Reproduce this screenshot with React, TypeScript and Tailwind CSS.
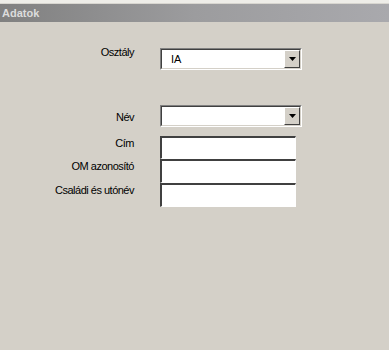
import React from "react";

const font = { fontFamily: "'Liberation Sans', Arial, sans-serif" };

function Arrow() {
  return (
    <div className="w-[16px] h-full bg-[#d4d0c8] border-t border-l border-t-white border-l-white border-b border-r border-b-[#404040] border-r-[#404040] flex items-center justify-center">
      <svg width="7" height="4" viewBox="0 0 7 4"><path d="M0 0h7L3.5 4z" fill="#000" /></svg>
    </div>
  );
}

function Field({ label, h }: { label: string; h: string }) {
  return (
    <div className="flex items-center">
      <div className="w-[134px] shrink-0 text-right text-[11px] tracking-[-0.5px] text-black -mt-[9px]">{label}</div>
      <div className={`ml-[26px] w-[136px] ${h} border-t-2 border-l-2 border-t-[#404040] border-l-[#404040] border-b border-r border-b-white border-r-white bg-white`} />
    </div>
  );
}

export default function App() {
  return (
    <div className="w-[389px] h-[350px] bg-[#d4d0c8] flex flex-col" style={font}>
      <div className="h-[3px] bg-[#eeede8]" />
      <div className="h-[1px] bg-[#d8d6d0]" />
      <div className="h-[18px] bg-gradient-to-r from-[#808080] via-[#9c9c9e] to-[#a9a9ad] flex items-center pl-[2px]">
        <span className="text-[11px] font-bold text-[#dcdcdc]">Adatok</span>
      </div>
      <div className="flex flex-col">
        <div className="flex items-center mt-[26px]">
          <div className="w-[134px] shrink-0 text-right text-[11px] tracking-[-0.5px] text-black -mt-[14px]">Osztály</div>
          <div className="ml-[26px] w-[142px] h-[22px] border-t border-l border-t-[#808080] border-l-[#808080] border-b border-r border-b-white border-r-white">
            <div className="h-full flex border-t border-l border-t-[#404040] border-l-[#404040] border-b border-r border-b-[#d4d0c8] border-r-[#d4d0c8] bg-white">
              <div className="flex-1 pl-[9px] flex items-center text-[11px] text-black">IA</div>
              <Arrow />
            </div>
          </div>
        </div>
        <div className="flex items-center mt-[35px]">
          <div className="w-[134px] shrink-0 text-right text-[11px] tracking-[-0.5px] text-black mt-[2px]">Név</div>
          <div className="ml-[26px] w-[142px] h-[22px] border-t border-l border-t-[#808080] border-l-[#808080] border-b border-r border-b-white border-r-white">
            <div className="h-full flex border-t border-l border-t-[#404040] border-l-[#404040] border-b border-r border-b-[#d4d0c8] border-r-[#d4d0c8] bg-white">
              <div className="flex-1" />
              <Arrow />
            </div>
          </div>
        </div>
        <div className="flex flex-col mt-[9px]">
          <Field label="Cím" h="h-[23px]" />
          <Field label="OM azonosító" h="h-[24px]" />
          <Field label="Családi és utónév" h="h-[24px]" />
        </div>
      </div>
    </div>
  );
}
